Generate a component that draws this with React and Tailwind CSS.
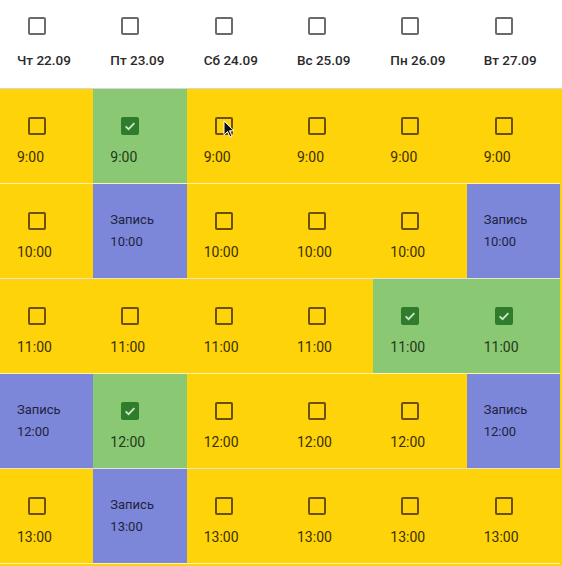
import React from "react";

const days = ["Чт 22.09", "Пт 23.09", "Сб 24.09", "Вс 25.09", "Пн 26.09", "Вт 27.09"];
const rows = [
  { t: "9:00", c: "YGYYYY" },
  { t: "10:00", c: "YBYYYB" },
  { t: "11:00", c: "YYYYGG" },
  { t: "12:00", c: "BGYYYB" },
  { t: "13:00", c: "YBYYYY" },
];

function Box({ checked, tone }) {
  if (checked) {
    return (
      <div className="ml-[11px] w-[18px] h-[18px] rounded-[2px] bg-[#2f7d2c] flex items-center justify-center">
        <svg width="14" height="14" viewBox="0 0 24 24">
          <path d="M4.5 12.5l5 5L19.5 7" fill="none" stroke="#cfe8c4" strokeWidth="3" />
        </svg>
      </div>
    );
  }
  return (
    <div
      className={
        "ml-[11px] w-[18px] h-[18px] rounded-[2px] border-2 " +
        (tone === "header" ? "border-[#6b6b6b]" : "border-[#6b5000]")
      }
    />
  );
}

function Cell({ kind, time }) {
  if (kind === "B") {
    return (
      <div className="bg-[#7c87d9] h-full flex flex-col pl-[17px] pt-[28px] text-[13px] leading-[16px] text-[#1f2340]">
        <div>Запись</div>
        <div className="mt-[6px]">{time}</div>
      </div>
    );
  }
  const green = kind === "G";
  return (
    <div
      className={
        "h-full flex flex-col items-start pl-[17px] pt-[28px] " +
        (green ? "bg-[#8bc874]" : "bg-[#fed30a]")
      }
    >
      <Box checked={green} />
      <div
        className={
          "mt-[12px] text-[14px] leading-[20px] " +
          (green ? "text-[#1f3a1a]" : "text-[#3b2f00]")
        }
      >
        {time}
      </div>
    </div>
  );
}

export default function App() {
  return (
    <div
      className="relative w-[562px] h-[566px] overflow-hidden bg-[#fed30a]"
      style={{ fontFamily: "Roboto, 'Noto Sans', sans-serif" }}
    >
      <div className="h-[89px] bg-white border-b border-[#d6d6d6]">
        <div className="grid grid-cols-6 w-[560px] h-full">
          {days.map((d) => (
            <div key={d} className="flex flex-col items-start pl-[17px] pt-[17px]">
              <Box tone="header" />
              <div className="mt-[15px] text-[13.5px] leading-[20px] font-medium text-[#2a2a2a]">{d}</div>
            </div>
          ))}
        </div>
      </div>
      {rows.map((r, i) => (
        <div
          key={r.t}
          className={
            "grid grid-cols-6 w-[560px] h-[95px] border-b " +
            (i % 2 === 1 ? "border-[#e2e2d8]" : "border-[#fff3b0]")
          }
        >
          {r.c.split("").map((k, j) => (
            <Cell key={j} kind={k} time={r.t} />
          ))}
        </div>
      ))}
      <svg className="absolute left-[223px] top-[120px]" width="12" height="18" viewBox="0 0 12 18">
        <path d="M1 1v14l3.5-3.5 2.5 5.5 2-1-2.5-5.2H11z" fill="#111" stroke="#fff" strokeWidth="1" />
      </svg>
    </div>
  );
}
